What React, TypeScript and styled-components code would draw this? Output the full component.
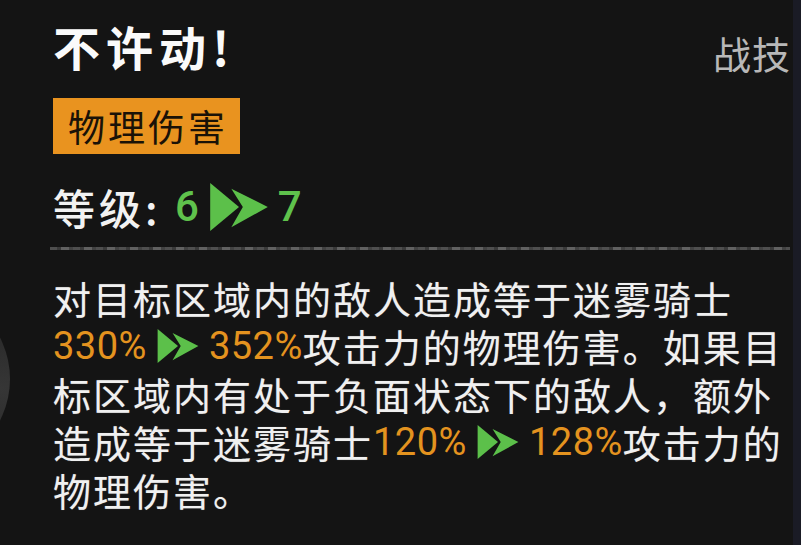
import React from "react";
import styled, { createGlobalStyle } from "styled-components";

const Global = createGlobalStyle`
  html, body { margin: 0; padding: 0; background: #131313; }
  #root { width: 801px; height: 545px; }
`;

const Page = styled.div`
  position: relative;
  width: 801px;
  height: 545px;
  display: flex;
  overflow: hidden;
  background: #141414;
  font-family: "Noto Sans CJK SC", "Noto Sans", sans-serif;
  color: #f2f2f2;
`;

/* edge of the round portrait behind the card */
const EdgeOrb = styled.div`
  position: absolute;
  left: -190px;
  top: 284px;
  width: 200px;
  height: 190px;
  border-radius: 50%;
  background: radial-gradient(ellipse at 95% 55%, #363636 0%, #2a2a2a 40%, #1c1c1c 100%);
`;

const Card = styled.div`
  position: relative;
  flex: 1;
  display: flex;
  flex-direction: column;
  padding: 18px 0 0 53px;
`;

const SideStrip = styled.div`
  width: 8px;
  background: #1a1b25;
`;

const Header = styled.div`
  display: flex;
  justify-content: space-between;
  align-items: flex-start;
`;

const Title = styled.h1`
  margin: 0;
  font-size: 47px;
  line-height: 56px;
  font-weight: 700;
  letter-spacing: 6px;
  color: #fafafa;
`;

const Kind = styled.span`
  margin-top: 13px;
  margin-right: 2px;
  font-size: 38px;
  line-height: 44px;
  letter-spacing: 1px;
  color: #b8b8b8;
`;

const Tag = styled.div`
  align-self: flex-start;
  margin-top: 23px;
  height: 56px;
  padding: 0 12px 0 15px;
  display: flex;
  align-items: center;
  background: #e9931f;
  color: #1a1207;
  font-size: 37px;
  line-height: 48px;
  letter-spacing: 3px;
`;

const Level = styled.div`
  margin-top: 28px;
  height: 50px;
  display: flex;
  align-items: center;
  font-size: 42px;
  line-height: 50px;
  font-weight: 500;
  letter-spacing: 4px;
`;

const LevelNum = styled.span`
  font-family: Roboto, "Noto Sans", sans-serif;
  font-size: 42px;
  font-weight: 500;
  letter-spacing: 0;
  color: #5fc24c;
`;

const Divider = styled.div`
  margin: 15px 3px 0 -3px;
  height: 3px;
  background:
    repeating-linear-gradient(90deg, rgba(255,255,255,0.18) 0 7px, rgba(255,255,255,0.05) 7px 11px, rgba(255,255,255,0.3) 11px 19px, rgba(255,255,255,0.1) 19px 23px),
    #3a3a3a;
  opacity: 0.8;
  filter: blur(0.6px);
`;

const Desc = styled.div`
  margin-top: 24px;
  display: flex;
  flex-direction: column;
`;

const Line = styled.div`
  height: 48px;
  line-height: 48px;
  display: flex;
  align-items: center;
  white-space: nowrap;
  font-size: 38px;
  letter-spacing: 2px;
  color: #f0f0f0;
  text-shadow: 0 0 1px rgba(255, 255, 255, 0.35);
`;

const Value = styled.span`
  font-family: Roboto, "Noto Sans", sans-serif;
  font-size: 38px;
  letter-spacing: 0.5px;
  color: #e4931f;
  text-shadow: none;
`;

const Arrow = ({ w, h, gap }: { w: number; h: number; gap: string }) => (
  <svg width={w} height={h} viewBox="0 0 60 50" style={{ margin: gap, flexShrink: 0 }}>
    <polygon points="0,0 30,25 0,50" fill="#5cc04a" />
    <polygon points="22,6 60,25 22,46 34,25" fill="#5cc04a" />
  </svg>
);

export default function App() {
  return (
    <>
      <Global />
      <Page>
        <EdgeOrb />
        <Card>
          <Header>
            <Title>不许动!</Title>
            <Kind>战技</Kind>
          </Header>
          <Tag>物理伤害</Tag>
          <Level>
            等级:&nbsp;
            <LevelNum>6</LevelNum>
            <Arrow w={62} h={48} gap="0 8px 0 9px" />
            <LevelNum>7</LevelNum>
          </Level>
          <Divider />
          <Desc>
            <Line>对目标区域内的敌人造成等于迷雾骑士</Line>
            <Line>
              <Value>330%</Value>
              <Arrow w={42} h={34} gap="0 10px 0 10px" />
              <Value>352%</Value>攻击力的物理伤害。如果目
            </Line>
            <Line>标区域内有处于负面状态下的敌人，额外</Line>
            <Line>
              造成等于迷雾骑士<Value>120%</Value>
              <Arrow w={42} h={34} gap="0 10px 0 10px" />
              <Value>128%</Value>攻击力的
            </Line>
            <Line>物理伤害。</Line>
          </Desc>
        </Card>
        <SideStrip />
      </Page>
    </>
  );
}
